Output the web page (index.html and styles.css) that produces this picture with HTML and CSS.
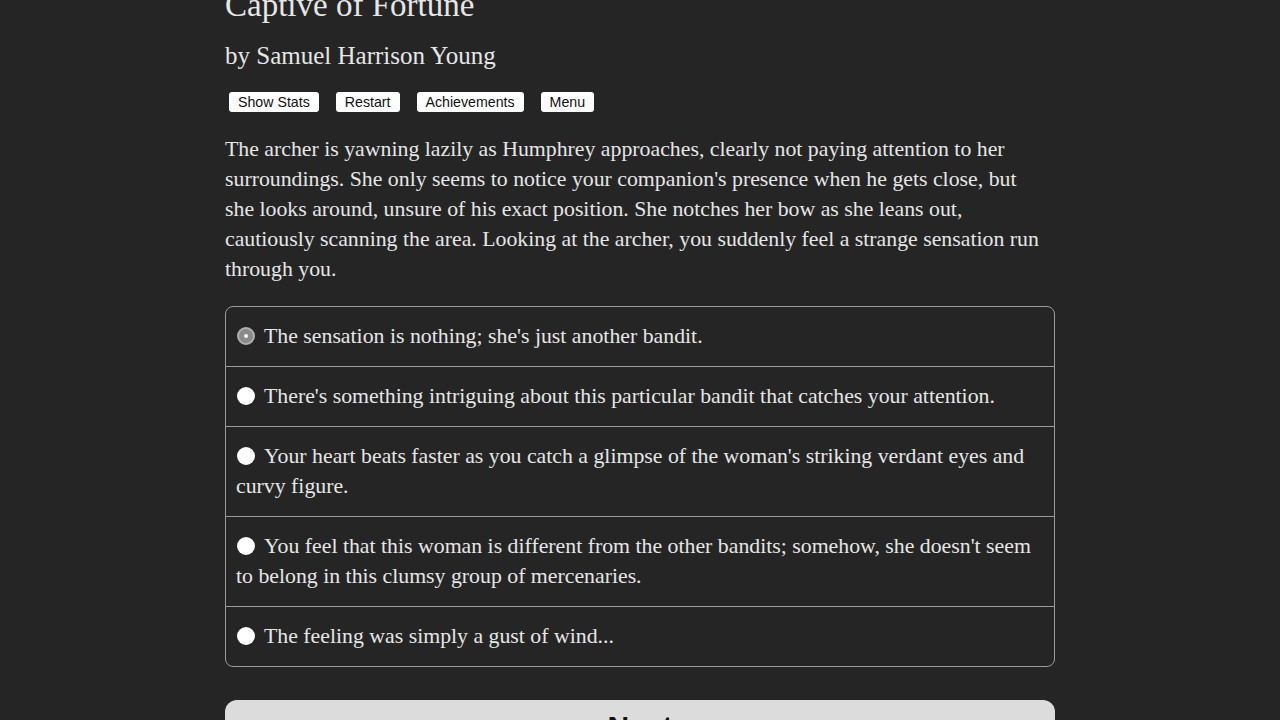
FILE: index.html
```html
<!DOCTYPE html>
<html>
<head>
<meta charset="utf-8">
<link rel="stylesheet" href="styles.css">
</head>
<body>
<div class="page">
  <h1 class="title">Captive of Fortune</h1>
  <h2 class="author">by Samuel Harrison Young</h2>
  <div class="buttons">
    <button class="small-btn">Show Stats</button>
    <button class="small-btn">Restart</button>
    <button class="small-btn">Achievements</button>
    <button class="small-btn">Menu</button>
  </div>
  <p class="story">The archer is yawning lazily as Humphrey approaches, clearly not paying attention to her surroundings. She only seems to notice your companion's presence when he gets close, but she looks around, unsure of his exact position. She notches her bow as she leans out, cautiously scanning the area. Looking at the archer, you suddenly feel a strange sensation run through you.</p>
  <form class="choices">
    <label class="choice"><span class="radio selected"></span>The sensation is nothing; she's just another bandit.</label>
    <label class="choice"><span class="radio"></span>There's something intriguing about this particular bandit that catches your attention.</label>
    <label class="choice"><span class="radio"></span>Your heart beats faster as you catch a glimpse of the woman's striking verdant eyes and curvy figure.</label>
    <label class="choice"><span class="radio"></span>You feel that this woman is different from the other bandits; somehow, she doesn't seem to belong in this clumsy group of mercenaries.</label>
    <label class="choice"><span class="radio"></span>The feeling was simply a gust of wind...</label>
  </form>
  <button class="next">Next</button>
</div>
</body>
</html>
```
FILE: styles.css
```css
html, body {
  margin: 0;
  padding: 0;
  background: #252525;
  height: 720px;
  overflow: hidden;
}
.page {
  width: 830px;
  margin: 0 auto;
  color: #e6e6e6;
  font-family: "Liberation Serif", "Times New Roman", serif;
  margin-top: -17px;
}
.title {
  font-weight: normal;
  font-size: 33px;
  line-height: 44px;
  margin: 0;
}
.author {
  font-weight: normal;
  font-size: 25px;
  line-height: 34px;
  margin: 12px 0 0 0;
}
.buttons {
  display: flex;
  gap: 17px;
  margin-top: 19px;
  padding-left: 4px;
}
.small-btn {
  font-family: "Liberation Sans", Arial, sans-serif;
  font-size: 14.2px;
  height: 20px;
  padding: 0 9px;
  background: #fff;
  color: #111;
  border: none;
  border-radius: 3px;
  line-height: 20px;
}
.story {
  font-size: 21.8px;
  line-height: 30px;
  margin: 22px 0 0 0;
  padding-right: 10px;
}
.choices {
  margin-top: 22px;
  border: 1px solid #9a9a9a;
  border-radius: 8px;
}
.choice {
  display: block;
  font-size: 21.8px;
  line-height: 30px;
  padding: 14px 10px 15px 10px;
  border-top: 1px solid #9a9a9a;
}
.choice:first-child {
  border-top: none;
}
.radio {
  display: inline-block;
  width: 18px;
  height: 18px;
  border-radius: 50%;
  background: #fff;
  vertical-align: -2px;
  margin: 0 9px 0 1px;
  box-sizing: border-box;
}
.radio.selected {
  background: #8a8a8a;
  border: 2px solid #b0b0b0;
  position: relative;
}
.radio.selected::after {
  content: "";
  position: absolute;
  left: 5px;
  top: 5px;
  width: 4px;
  height: 4px;
  border-radius: 50%;
  background: #fff;
}
.next {
  display: block;
  width: 830px;
  height: 60px;
  margin-top: 33px;
  background: #dcdcdc;
  border: none;
  border-radius: 12px;
  font-family: "Liberation Sans", Arial, sans-serif;
  font-weight: bold;
  font-size: 30px;
  line-height: 40px;
  color: #111;
  padding: 7px 0 13px 0;
}
```
